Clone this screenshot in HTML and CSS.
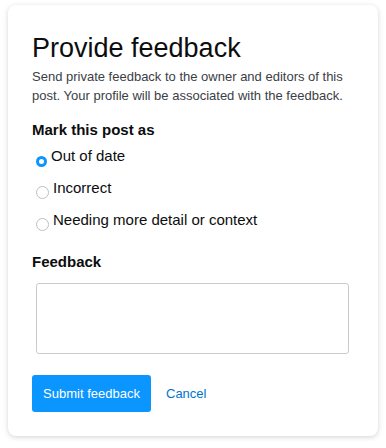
FILE: index.html
```html
<!DOCTYPE html>
<html>
<head>
    <meta charset="UTF-8">
    <meta name="viewport" content="width=device-width, initial-scale=1.0">
    <title>Provide feedback</title>
    <link rel="stylesheet" href="styles.css">
</head>
<body>
    <div class="card">
        <h1 class="title">Provide feedback</h1>
        <p class="desc">Send private feedback to the owner and editors of this post. Your profile will be associated with the feedback.</p>

        <!-- Mark as options -->
        <div class="label">Mark this post as</div>
        <div class="options">
            <label class="option"><input type="radio" name="mark" checked><span class="dot"></span>Out of date</label>
            <label class="option"><input type="radio" name="mark"><span class="dot"></span>Incorrect</label>
            <label class="option"><input type="radio" name="mark"><span class="dot"></span>Needing more detail or context</label>
        </div>

        <div class="label feedback-label">Feedback</div>
        <textarea class="feedback"></textarea>

        <div class="actions">
            <button class="btn">Submit feedback</button>
            <a href="#" class="cancel">Cancel</a>
        </div>
    </div>
</body>
</html>
```

FILE: styles.css
```css
body {
    font-family: 'Liberation Sans', Arial, sans-serif;
    background: #fff;
    margin: 0;
    padding: 5px 8px;
    color: #0c0d0e;
}
.card {
    background: #fff;
    border-radius: 8px;
    box-shadow: 0 1px 4px rgba(0, 0, 0, 0.12), 0 2px 8px rgba(0, 0, 0, 0.06);
    height: 431px;
    box-sizing: border-box;
    padding: 26px 24px 0 24px;
}
.title {
    font-size: 27px;
    font-weight: normal;
    margin: 0;
    line-height: 34px;
}
.desc {
    font-size: 13px;
    line-height: 19px;
    color: #3b4045;
    margin: 2px 0 0 0;
}
.label {
    font-size: 15px;
    font-weight: bold;
    margin-top: 15px;
    line-height: 20px;
}
.options {
    display: flex;
    flex-direction: column;
    gap: 12px;
    margin-top: 6px;
    padding-left: 4px;
}
.option {
    display: flex;
    align-items: flex-end;
    font-size: 15px;
    line-height: 20px;
}
.option input {
    display: none;
}
.dot {
    width: 11px;
    height: 11px;
    border: 1px solid #bbc0c4;
    border-radius: 50%;
    margin-right: 4px;
    margin-bottom: -1px;
    box-sizing: content-box;
}
.option input:checked + .dot {
    border: 3.5px solid #0a95ff;
    width: 5px;
    height: 5px;
    background: #fff;
}
.feedback-label {
    margin-top: 22px;
}
.feedback {
    display: block;
    width: 313px;
    height: 71px;
    margin: 11px 0 0 4px;
    box-sizing: border-box;
    border: 1px solid #c8ccd0;
    border-radius: 3px;
    resize: none;
}
.actions {
    display: flex;
    align-items: center;
    margin-top: 21px;
}
.btn {
    background: #0a95ff;
    color: #fff;
    border: none;
    border-radius: 3px;
    font-family: inherit;
    font-size: 13px;
    width: 119px;
    height: 37px;
    padding: 0;
}
.cancel {
    color: #0074cc;
    text-decoration: none;
    font-size: 13px;
    margin-left: 15px;
}
```
